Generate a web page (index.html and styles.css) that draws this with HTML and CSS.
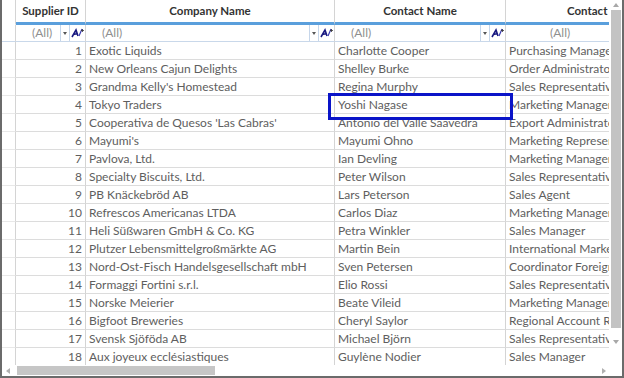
FILE: index.html
```html
<!DOCTYPE html>
<html lang="en">
  <head>
    <meta charset="UTF-8" />
    <title>Suppliers Grid</title>
    <link rel="stylesheet" href="styles.css">
  </head>
  <body>
    <div class="frame">
      <div class="main">
        <div class="viewport">
          <div class="row head">
            <div class="cell ind"></div>
            <div class="cell">Supplier ID</div>
            <div class="cell">Company Name</div>
            <div class="cell">Contact Name</div>
            <div class="cell title-head">Contact Title</div>
          </div>
          <div class="row filter">
            <div class="cell ind"></div>
            <div class="cell"><span class="all">(All)</span><span class="drop"><i class="tri-down"></i></span><span class="fbtn"><svg width="13" height="10" viewBox="0 0 13 10"><path d="M1 9 L5 2 L7 8 M2.5 6.5 L6.5 5.5" stroke="#1a1a80" stroke-width="1.6" fill="none"/><path d="M8 8 L11 1" stroke="#3a3ab0" stroke-width="1.2"/><path d="M11.5 1 v3 M10 2.5 h3" stroke="#333" stroke-width="0.8"/></svg></span></div>
            <div class="cell"><span class="all">(All)</span><span class="drop"><i class="tri-down"></i></span><span class="fbtn"><svg width="13" height="10" viewBox="0 0 13 10"><path d="M1 9 L5 2 L7 8 M2.5 6.5 L6.5 5.5" stroke="#1a1a80" stroke-width="1.6" fill="none"/><path d="M8 8 L11 1" stroke="#3a3ab0" stroke-width="1.2"/><path d="M11.5 1 v3 M10 2.5 h3" stroke="#333" stroke-width="0.8"/></svg></span></div>
            <div class="cell"><span class="all">(All)</span><span class="drop"><i class="tri-down"></i></span><span class="fbtn"><svg width="13" height="10" viewBox="0 0 13 10"><path d="M1 9 L5 2 L7 8 M2.5 6.5 L6.5 5.5" stroke="#1a1a80" stroke-width="1.6" fill="none"/><path d="M8 8 L11 1" stroke="#3a3ab0" stroke-width="1.2"/><path d="M11.5 1 v3 M10 2.5 h3" stroke="#333" stroke-width="0.8"/></svg></span></div>
            <div class="cell title-filter"><span class="all">(All)</span></div>
          </div>
          <div class="row"><div class="cell ind"></div><div class="cell num">1</div><div class="cell">Exotic Liquids</div><div class="cell">Charlotte Cooper</div><div class="cell">Purchasing Manager</div></div>
          <div class="row"><div class="cell ind"></div><div class="cell num">2</div><div class="cell">New Orleans Cajun Delights</div><div class="cell">Shelley Burke</div><div class="cell">Order Administrator</div></div>
          <div class="row"><div class="cell ind"></div><div class="cell num">3</div><div class="cell">Grandma Kelly's Homestead</div><div class="cell">Regina Murphy</div><div class="cell">Sales Representative</div></div>
          <div class="row"><div class="cell ind"></div><div class="cell num">4</div><div class="cell">Tokyo Traders</div><div class="cell selected">Yoshi Nagase</div><div class="cell">Marketing Manager</div></div>
          <div class="row"><div class="cell ind"></div><div class="cell num">5</div><div class="cell">Cooperativa de Quesos 'Las Cabras'</div><div class="cell">Antonio del Valle Saavedra</div><div class="cell">Export Administrator</div></div>
          <div class="row"><div class="cell ind"></div><div class="cell num">6</div><div class="cell">Mayumi's</div><div class="cell">Mayumi Ohno</div><div class="cell">Marketing Representative</div></div>
          <div class="row"><div class="cell ind"></div><div class="cell num">7</div><div class="cell">Pavlova, Ltd.</div><div class="cell">Ian Devling</div><div class="cell">Marketing Manager</div></div>
          <div class="row"><div class="cell ind"></div><div class="cell num">8</div><div class="cell">Specialty Biscuits, Ltd.</div><div class="cell">Peter Wilson</div><div class="cell">Sales Representative</div></div>
          <div class="row"><div class="cell ind"></div><div class="cell num">9</div><div class="cell">PB Knäckebröd AB</div><div class="cell">Lars Peterson</div><div class="cell">Sales Agent</div></div>
          <div class="row"><div class="cell ind"></div><div class="cell num">10</div><div class="cell">Refrescos Americanas LTDA</div><div class="cell">Carlos Diaz</div><div class="cell">Marketing Manager</div></div>
          <div class="row"><div class="cell ind"></div><div class="cell num">11</div><div class="cell">Heli Süßwaren GmbH &amp; Co. KG</div><div class="cell">Petra Winkler</div><div class="cell">Sales Manager</div></div>
          <div class="row"><div class="cell ind"></div><div class="cell num">12</div><div class="cell">Plutzer Lebensmittelgroßmärkte AG</div><div class="cell">Martin Bein</div><div class="cell">International Marketing Mgr.</div></div>
          <div class="row"><div class="cell ind"></div><div class="cell num">13</div><div class="cell">Nord-Ost-Fisch Handelsgesellschaft mbH</div><div class="cell">Sven Petersen</div><div class="cell">Coordinator Foreign Markets</div></div>
          <div class="row"><div class="cell ind"></div><div class="cell num">14</div><div class="cell">Formaggi Fortini s.r.l.</div><div class="cell">Elio Rossi</div><div class="cell">Sales Representative</div></div>
          <div class="row"><div class="cell ind"></div><div class="cell num">15</div><div class="cell">Norske Meierier</div><div class="cell">Beate Vileid</div><div class="cell">Marketing Manager</div></div>
          <div class="row"><div class="cell ind"></div><div class="cell num">16</div><div class="cell">Bigfoot Breweries</div><div class="cell">Cheryl Saylor</div><div class="cell">Regional Account Rep.</div></div>
          <div class="row"><div class="cell ind"></div><div class="cell num">17</div><div class="cell">Svensk Sjöföda AB</div><div class="cell">Michael Björn</div><div class="cell">Sales Representative</div></div>
          <div class="row"><div class="cell ind"></div><div class="cell num">18</div><div class="cell">Aux joyeux ecclésiastiques</div><div class="cell">Guylène Nodier</div><div class="cell">Sales Manager</div></div>
        </div>
        <div class="vscroll">
          <i class="tri-up"></i>
          <div class="vthumb"></div>
          <i class="tri-down"></i>
        </div>
      </div>
      <div class="hscroll">
        <i class="tri-left"></i>
        <div class="htrack"><div class="hthumb"></div></div>
        <i class="tri-right"></i>
      </div>
    </div>
  </body>
</html>
```

FILE: styles.css
```css
* {
  box-sizing: border-box;
}

body {
  margin: 0;
  font-family: Lato, "Open Sans", sans-serif;
  font-size: 12px;
  color: #5e5e5e;
  background: #fff;
}

.frame {
  width: 624px;
  height: 378px;
  border-left: 2px solid #6b6b6b;
  border-right: 2px solid #6b6b6b;
  border-bottom: 2px solid #6b6b6b;
  display: flex;
  flex-direction: column;
  overflow: hidden;
}

.main {
  display: flex;
  height: 365px;
}

.viewport {
  width: 607px;
  overflow: hidden;
}

.row {
  display: grid;
  grid-template-columns: 14px 70px 249px 171px 200px;
  height: 18px;
  width: 704px;
}

.cell {
  border-right: 1px solid #d4d4d4;
  border-bottom: 1px solid #dcdcdc;
  padding: 0 3px;
  line-height: 17px;
  white-space: nowrap;
  overflow: hidden;
}

.cell.ind {
  border-bottom-color: #e8e8e8;
}

.num {
  text-align: right;
}

.head {
  height: 25px;
}

.head .cell {
  border-bottom: 3px solid #5a9fdc;
  font-weight: bold;
  font-size: 11.5px;
  color: #333;
  text-align: center;
  line-height: 22px;
}

.head .cell.ind {
  border-bottom: 1px solid #fff;
}

.head .title-head {
  text-align: left;
  padding-left: 61px;
}

.filter {
  height: 17px;
}

.filter .cell {
  display: flex;
  align-items: stretch;
  padding: 0 0 0 16px;
  line-height: 16px;
  color: #8f8f8f;
  border-bottom-color: #c9d8ea;
}

.filter .cell.ind {
  padding: 0;
}

.filter .title-filter {
  padding-left: 44px;
}

.all {
  flex: 1;
}

.drop {
  width: 10px;
  border-left: 1px solid #c6d6ea;
  border-right: 1px solid #c6d6ea;
  display: flex;
  align-items: center;
  justify-content: center;
}

.drop .tri-down {
  border-top-color: #555;
  border-width: 3px 2px 0;
}

.fbtn {
  width: 15px;
  display: flex;
  align-items: center;
  justify-content: center;
}

.selected {
  position: relative;
  overflow: visible;
}

.selected::after {
  content: "";
  position: absolute;
  left: -7px;
  right: -8px;
  top: -3px;
  bottom: -7px;
  border: 3px solid #0a14c8;
}

.tri-up,
.tri-down,
.tri-left,
.tri-right {
  display: block;
  width: 0;
  height: 0;
  border-style: solid;
  border-color: transparent;
}

.tri-up {
  border-width: 0 3px 4px;
  border-bottom-color: #a8a8a8;
}

.tri-down {
  border-width: 4px 3px 0;
  border-top-color: #a8a8a8;
}

.tri-left {
  border-width: 3px 4px 3px 0;
  border-right-color: #b0b0b0;
}

.tri-right {
  border-width: 3px 0 3px 4px;
  border-left-color: #b0b0b0;
}

.vscroll {
  width: 13px;
  display: flex;
  flex-direction: column;
  align-items: center;
  padding-top: 3px;
}

.vthumb {
  width: 10px;
  height: 318px;
  margin: 3px 0 12px;
  background: #c3c3c3;
}

.hscroll {
  display: flex;
  align-items: center;
  height: 11px;
  width: 607px;
  padding: 0 3px 0 4px;
}

.htrack {
  flex: 1;
  padding-left: 7px;
}

.hthumb {
  width: 198px;
  height: 9px;
  background: #c6c6c6;
}
```
